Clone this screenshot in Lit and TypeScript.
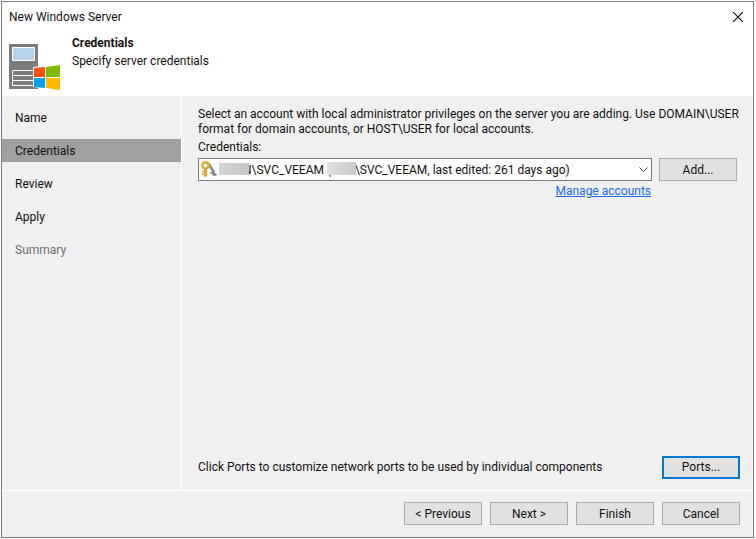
import { LitElement, html, css } from "lit";
import { customElement, state } from "lit/decorators.js";
import { classMap } from "lit/directives/class-map.js";

const STEPS = ["Name", "Credentials", "Review", "Apply", "Summary"];
const GAP = "\u00a0".repeat(8);
const ACCOUNT = `N\\SVC_VEEAM (${GAP}\\SVC_VEEAM, last edited: 261 days ago)`;

@customElement("app-root")
export class AppRoot extends LitElement {
  @state() private current = 1;

  static styles = css`
    :host {
      display: block;
      box-sizing: border-box;
      min-height: 100vh;
      padding: 1px 2px 1px 1px;
      background: #fff;
      color: #111;
      font: 12px/15px Roboto, "Open Sans", sans-serif;
    }
    * {
      box-sizing: border-box;
    }
    .window {
      display: flex;
      flex-direction: column;
      min-height: calc(100vh - 2px);
      border: 1px solid #7c7c7c;
      background: #f0f0f0;
    }
    .titlebar {
      display: flex;
      align-items: center;
      justify-content: space-between;
      height: 30px;
      padding: 0 10px 0 7px;
      background: #fff;
    }
    h1,
    h2,
    p {
      margin: 0;
      font-size: 12px;
      font-weight: 400;
    }
    h2 {
      font-weight: 700;
    }
    .close {
      display: flex;
      padding: 0;
      border: 0;
      background: none;
    }
    .banner {
      display: flex;
      gap: 11px;
      height: 64px;
      padding: 4px 7px;
      background: #fff;
    }
    .banner svg {
      margin-top: 8px;
    }
    .heading {
      display: flex;
      flex-direction: column;
      gap: 3px;
    }
    .body {
      display: flex;
      flex: 1;
    }
    nav {
      flex: 0 0 180px;
      padding-top: 10px;
      border-right: 1px solid #fff;
    }
    ol {
      display: flex;
      flex-direction: column;
      gap: 10px;
      margin: 0;
      padding: 0;
      list-style: none;
    }
    .step {
      display: block;
      width: 100%;
      height: 23px;
      padding: 2px 13px 0;
      border: 0;
      background: none;
      color: inherit;
      font: inherit;
      text-align: left;
    }
    .step.current {
      background: #a0a0a0;
    }
    .step:disabled {
      color: #6d6d6d;
    }
    main {
      display: flex;
      flex: 1;
      flex-direction: column;
      padding: 11px 10px 11px 16px;
    }
    .label {
      margin: 3px 0;
    }
    .row {
      display: flex;
      align-items: center;
      gap: 7px;
      padding-right: 6px;
    }
    .combo {
      position: relative;
      flex: 1;
      height: 23px;
    }
    select {
      width: 100%;
      height: 100%;
      padding: 2px 20px 0 44px;
      border: 1px solid #7a7a7a;
      border-radius: 0;
      appearance: none;
      background: #fff;
      color: inherit;
      font: inherit;
    }
    .combo svg,
    .mask {
      position: absolute;
      pointer-events: none;
    }
    .key {
      top: 3px;
      left: 2px;
    }
    .chevron {
      top: 9px;
      right: 4px;
    }
    .mask {
      top: 5px;
      left: 21px;
      width: 30px;
      height: 12px;
      background: linear-gradient(100deg, #d6d6d6, #c4c4c4);
    }
    .mask.second {
      top: 4px;
      left: 129px;
      width: 29px;
      height: 13px;
      background: linear-gradient(100deg, #e2e2e2, #c8c8c8);
    }
    .manage {
      display: flex;
      justify-content: flex-end;
      padding: 3px 92px 0 0;
    }
    a {
      color: #1a6cf0;
    }
    .ports {
      justify-content: space-between;
      margin-top: auto;
      padding-right: 3px;
    }
    .button {
      width: 78px;
      height: 23px;
      padding: 2px 0 0;
      border: 1px solid #adadad;
      background: #e1e1e1;
      color: inherit;
      font: inherit;
    }
    .button.focused {
      padding: 0;
      border: 2px solid #0078d7;
    }
    footer {
      display: flex;
      justify-content: flex-end;
      gap: 8px;
      padding: 11px 13px 12px;
      border-top: 1px solid #fff;
    }
  `;

  private renderServer() {
    return html`<svg width="52" height="48" viewBox="0 0 52 48" aria-hidden="true">
      <path fill="#7c7c7c" d="M0 0h29v45H0z" />
      <path fill="#b9d3ee" stroke="#fff" d="M3.500 3.500h22v13h-22z" />
      <path
        fill="#7c7c7c"
        stroke="#fff"
        d="M3.500 26.500h22v5h-22zM3.500 31.500h22v5h-22zM3.500 36.500h22v5h-22z"
      />
      <path fill="#fff" d="M24 23l28-3v27l-28-4z" />
      <path fill="#f65314" d="M25 24l11-1v10H25z" />
      <path fill="#7cbb00" d="M37 23l14-2v12H37z" />
      <path fill="#00a1f1" d="M25 34h11v10l-11-1z" />
      <path fill="#ffbb00" d="M37 34h14v12l-14-2z" />
    </svg>`;
  }

  private renderKey() {
    return html`<svg class="key" width="18" height="17" viewBox="0 0 18 17" aria-hidden="true">
      <path d="M8.500 2.500l5.500 9" fill="none" stroke="#858585" stroke-width="2.500" />
      <path d="M10.500 12h3v3M13.500 12l3 2.500" fill="none" stroke="#858585" stroke-width="1.800" />
      <path fill="#e5a72c" d="M4 7h3v8l-1.500 1.500L4 15zM2 10h2v1.500H2zM2 12.500h2V14H2z" />
      <circle cx="5.500" cy="4.500" r="3.200" fill="#fff" stroke="#e5a72c" stroke-width="2.400" />
    </svg>`;
  }

  render() {
    return html`
      <div class="window">
        <div class="titlebar">
          <h1>New Windows Server</h1>
          <button class="close" aria-label="Close">
            <svg width="10" height="10" viewBox="0 0 10 10">
              <path d="M0 0l10 10M10 0L0 10" stroke="#111" stroke-width="1.200" />
            </svg>
          </button>
        </div>
        <header class="banner">
          ${this.renderServer()}
          <div class="heading">
            <h2>Credentials</h2>
            <p>Specify server credentials</p>
          </div>
        </header>
        <div class="body">
          <nav aria-label="Steps">
            <ol>
              ${STEPS.map(
                (name, i) => html`<li>
                  <button
                    class=${classMap({ step: true, current: i === this.current })}
                    ?disabled=${i === STEPS.length - 1}
                    @click=${() => (this.current = i)}
                  >
                    ${name}
                  </button>
                </li>`
              )}
            </ol>
          </nav>
          <main>
            <p>
              Select an account with local administrator privileges on the server you are adding. Use DOMAIN\\USER
              format for domain accounts, or HOST\\USER for local accounts.
            </p>
            <label class="label" for="account">Credentials:</label>
            <div class="row">
              <div class="combo">
                <select id="account">
                  <option>${ACCOUNT}</option>
                </select>
                ${this.renderKey()}
                <span class="mask"></span>
                <span class="mask second"></span>
                <svg class="chevron" width="9" height="6" viewBox="0 0 9 6" aria-hidden="true">
                  <path d="M.5.5l4 4 4-4" fill="none" stroke="#444" />
                </svg>
              </div>
              <button class="button">Add...</button>
            </div>
            <div class="manage"><a href="#accounts">Manage accounts</a></div>
            <div class="row ports">
              <p>Click Ports to customize network ports to be used by individual components</p>
              <button class="button focused">Ports...</button>
            </div>
          </main>
        </div>
        <footer>
          <button class="button">&lt; Previous</button>
          <button class="button">Next &gt;</button>
          <button class="button">Finish</button>
          <button class="button">Cancel</button>
        </footer>
      </div>
    `;
  }
}
